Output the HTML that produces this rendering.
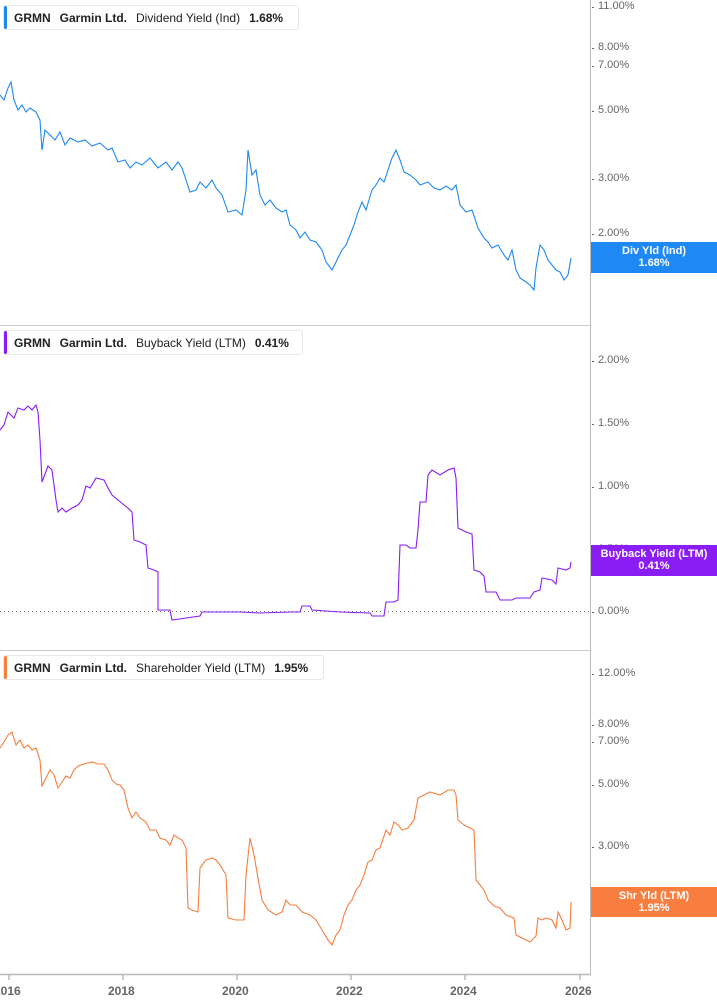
<!DOCTYPE html>
<html><head><meta charset="utf-8"><style>
body{margin:0;width:717px;height:1005px;background:#fff;font-family:"Liberation Sans",sans-serif;position:relative;overflow:hidden}
.lg{position:absolute;left:3px;height:25px;border:1px solid #e8e8e8;border-radius:3px;background:#fff;font-size:12px;font-weight:bold;color:#222;line-height:25px;padding-left:10px;white-space:nowrap;box-sizing:border-box}
.lg i{position:absolute;left:0;top:0;bottom:0;width:3px;border-radius:2px}
.lg span{margin-right:9px}
.lg .n{font-weight:normal;color:#222}
.ax{position:absolute;left:598px;font-size:11px;color:#666}
.ax:before{content:"";position:absolute;left:-6px;top:7px;width:2px;height:1px;background:#666}
.tag{position:absolute;left:591px;width:126px;color:#fff;font-size:11px;font-weight:bold;text-align:center;line-height:12px;padding-top:3px;box-sizing:border-box}
.yr{position:absolute;top:984px;font-size:12px;font-weight:bold;color:#666}
</style></head><body>
<svg width="717" height="1005" style="position:absolute;left:0;top:0">
<line x1="590.5" y1="0" x2="590.5" y2="975" stroke="#bbb"/>
<line x1="0" y1="325.5" x2="590" y2="325.5" stroke="#ccc"/>
<line x1="0" y1="650.5" x2="590" y2="650.5" stroke="#ccc"/>
<line x1="0" y1="974.5" x2="591" y2="974.5" stroke="#bbb" stroke-width="1.5"/>
<line x1="0" y1="611.5" x2="590" y2="611.5" stroke="#777" stroke-dasharray="1,3"/>
<g stroke="#999"><line x1="9" y1="975" x2="9" y2="980"/><line x1="123" y1="975" x2="123" y2="980"/><line x1="237" y1="975" x2="237" y2="980"/><line x1="351" y1="975" x2="351" y2="980"/><line x1="465" y1="975" x2="465" y2="980"/><line x1="580" y1="975" x2="580" y2="980"/></g>
<polyline fill="none" stroke="#1e88f5" stroke-width="1.1" points="0,95 4,100 8,88 11,82 14,100 18,110 22,105 26,112 30,108 36,112 40,120 42,150 45,130 50,135 55,140 60,132 65,145 70,138 78,142 85,140 92,146 100,143 108,150 112,148 118,162 125,160 130,168 136,162 142,165 150,158 158,168 166,162 172,170 178,162 182,168 186,180 190,192 196,190 200,182 206,188 212,180 216,188 222,195 228,212 236,210 242,215 246,190 248,150 252,175 256,170 260,195 265,205 270,200 276,208 282,212 286,210 290,225 296,230 300,238 305,232 310,240 316,242 322,250 326,262 332,270 336,262 342,250 346,245 350,235 354,225 358,212 362,202 366,210 372,190 376,185 380,178 384,182 388,170 392,158 396,150 400,160 404,172 410,175 416,180 420,185 428,182 434,188 440,190 446,186 452,190 456,185 460,205 466,212 472,210 478,228 484,238 488,242 492,248 498,245 504,255 508,260 512,250 516,270 520,278 526,282 530,285 534,290 536,268 540,245 544,250 548,260 552,265 556,270 560,272 564,280 568,275 571,258"/>
<polyline fill="none" stroke="#8a1cf5" stroke-width="1.1" points="0,430 4,425 8,412 14,418 18,408 24,410 28,406 32,410 36,405 38,412 40,440 42,482 48,466 52,470 56,500 58,512 62,508 66,512 72,508 78,505 82,500 86,486 90,488 96,478 104,480 108,488 112,495 118,500 124,505 128,508 132,512 134,540 140,542 146,545 148,568 154,570 158,572 158,610 170,610 172,620 186,618 200,616 202,612 240,612 260,613 290,612 300,612 302,606 310,606 312,610 340,612 370,613 372,616 384,616 386,602 394,602 398,600 400,545 406,545 410,548 416,548 418,530 420,502 426,502 428,475 432,470 440,475 448,470 454,468 456,478 458,528 466,532 472,534 474,570 480,572 484,576 486,592 496,592 500,600 512,600 516,598 530,598 534,592 540,590 542,578 552,580 556,584 558,568 566,570 570,568 571,562"/>
<polyline fill="none" stroke="#f77e3e" stroke-width="1.1" points="0,748 4,742 8,735 12,732 16,745 20,740 24,748 28,745 32,750 36,748 40,760 42,786 46,778 50,770 54,775 58,788 62,782 66,776 70,778 74,770 78,766 84,764 92,762 98,764 104,764 108,770 112,780 116,784 120,785 124,790 128,808 132,818 136,812 140,818 146,822 150,830 156,830 160,838 166,840 170,845 174,835 178,838 182,840 186,848 188,908 192,910 198,912 200,868 206,860 212,858 216,860 220,865 226,875 228,918 236,920 244,920 246,875 250,838 254,855 258,878 262,900 268,910 276,915 282,912 286,900 290,905 296,905 302,912 310,915 316,920 322,930 328,940 332,945 336,935 340,930 344,915 348,905 352,900 356,890 360,885 364,875 368,862 372,860 376,850 380,848 386,830 390,835 394,822 398,825 402,830 408,828 414,820 418,798 424,795 430,792 440,795 448,790 454,790 456,795 458,820 464,825 470,828 474,830 476,880 480,885 484,890 488,900 494,906 500,908 506,915 514,918 516,935 522,938 526,940 530,942 536,936 538,918 542,920 546,918 552,920 556,928 558,912 562,920 566,930 570,928 571,902"/>
</svg>
<div class="lg" style="top:5px;width:296px"><i style="background:#1e88f5"></i><span>GRMN</span><span>Garmin Ltd.</span><span class="n">Dividend Yield (Ind)</span><span>1.68%</span></div>
<div class="lg" style="top:330px;width:300px"><i style="background:#8a1cf5"></i><span>GRMN</span><span>Garmin Ltd.</span><span class="n">Buyback Yield (LTM)</span><span>0.41%</span></div>
<div class="lg" style="top:655px;width:321px"><i style="background:#f77e3e"></i><span>GRMN</span><span>Garmin Ltd.</span><span class="n">Shareholder Yield (LTM)</span><span>1.95%</span></div>
<div class="ax" style="top:0px">11.00%</div>
<div class="ax" style="top:41px">8.00%</div>
<div class="ax" style="top:59px">7.00%</div>
<div class="ax" style="top:104px">5.00%</div>
<div class="ax" style="top:172px">3.00%</div>
<div class="ax" style="top:227px">2.00%</div>
<div class="ax" style="top:354px">2.00%</div>
<div class="ax" style="top:417px">1.50%</div>
<div class="ax" style="top:480px">1.00%</div>
<div class="ax" style="top:543px">0.50%</div>
<div class="ax" style="top:605px">0.00%</div>
<div class="ax" style="top:667px">12.00%</div>
<div class="ax" style="top:718px">8.00%</div>
<div class="ax" style="top:735px">7.00%</div>
<div class="ax" style="top:778px">5.00%</div>
<div class="ax" style="top:840px">3.00%</div>
<div class="tag" style="top:242px;height:31px;background:#1e88f5">Div Yld (Ind)<br>1.68%</div>
<div class="tag" style="top:545px;height:31px;background:#8a1cf5">Buyback Yield (LTM)<br>0.41%</div>
<div class="tag" style="top:887px;height:30px;background:#f77e3e">Shr Yld (LTM)<br>1.95%</div>
<div class="yr" style="left:-6px">2016</div>
<div class="yr" style="left:108px">2018</div>
<div class="yr" style="left:222px">2020</div>
<div class="yr" style="left:336px">2022</div>
<div class="yr" style="left:450px">2024</div>
<div class="yr" style="left:565px">2026</div>
</body></html>
